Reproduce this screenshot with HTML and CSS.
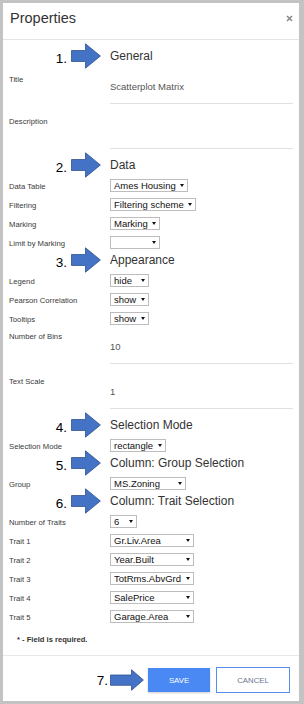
FILE: index.html
```html
<!DOCTYPE html>
<html lang="en">
<head>
    <meta charset="UTF-8">
    <meta name="viewport" content="width=device-width, initial-scale=1.0">
    <title>Properties</title>
    <link rel="stylesheet" href="styles.css">
</head>
<body>

<div class="dialog">
    <div class="dialog-header">
        <h2>Properties</h2>
        <button class="close" aria-label="Close">
            <svg width="7" height="7" viewBox="0 0 7 7"><path d="M1 1L6 6M6 1L1 6" stroke="#8a8a8a" stroke-width="1.6"/></svg>
        </button>
    </div>

    <div class="dialog-body">
        <div class="section-title">
            <div class="marker">
                <span class="step">1.</span>
                <svg class="arrow" width="30" height="26" viewBox="0 0 30 26"><path d="M0.5 7.5H14.5V0.8L29.4 13L14.5 25.2V18.5H0.5Z" fill="#4472c4" stroke="#2f528f" stroke-width="0.8"/></svg>
            </div>
            <h3>General</h3>
        </div>
        <div class="field field-first">
            <label>Title</label>
            <div class="input">Scatterplot Matrix</div>
        </div>
        <div class="field">
            <label>Description</label>
            <div class="input"></div>
        </div>

        <div class="section-title">
            <div class="marker">
                <span class="step">2.</span>
                <svg class="arrow" width="30" height="26" viewBox="0 0 30 26"><path d="M0.5 7.5H14.5V0.8L29.4 13L14.5 25.2V18.5H0.5Z" fill="#4472c4" stroke="#2f528f" stroke-width="0.8"/></svg>
            </div>
            <h3>Data</h3>
        </div>
        <div class="row">
            <label>Data Table</label>
            <div class="select"><select><option>Ames Housing</option></select></div>
        </div>
        <div class="row">
            <label>Filtering</label>
            <div class="select"><select><option>Filtering scheme</option></select></div>
        </div>
        <div class="row">
            <label>Marking</label>
            <div class="select"><select><option>Marking</option></select></div>
        </div>
        <div class="row">
            <label>Limit by Marking</label>
            <div class="select"><select><option></option><option>Marking</option></select></div>
        </div>

        <div class="section-title">
            <div class="marker">
                <span class="step">3.</span>
                <svg class="arrow" width="30" height="26" viewBox="0 0 30 26"><path d="M0.5 7.5H14.5V0.8L29.4 13L14.5 25.2V18.5H0.5Z" fill="#4472c4" stroke="#2f528f" stroke-width="0.8"/></svg>
            </div>
            <h3>Appearance</h3>
        </div>
        <div class="row">
            <label>Legend</label>
            <div class="select"><select><option>hide</option><option>show</option></select></div>
        </div>
        <div class="row">
            <label>Pearson Correlation</label>
            <div class="select"><select><option>show</option><option>hide</option></select></div>
        </div>
        <div class="row">
            <label>Tooltips</label>
            <div class="select"><select><option>show</option><option>hide</option></select></div>
        </div>
        <div class="field">
            <label>Number of Bins</label>
            <div class="input">10</div>
        </div>
        <div class="field">
            <label>Text Scale</label>
            <div class="input">1</div>
        </div>

        <div class="section-title">
            <div class="marker">
                <span class="step">4.</span>
                <svg class="arrow" width="30" height="26" viewBox="0 0 30 26"><path d="M0.5 7.5H14.5V0.8L29.4 13L14.5 25.2V18.5H0.5Z" fill="#4472c4" stroke="#2f528f" stroke-width="0.8"/></svg>
            </div>
            <h3>Selection Mode</h3>
        </div>
        <div class="row">
            <label>Selection Mode</label>
            <div class="select"><select><option>rectangle</option><option>lasso</option></select></div>
        </div>

        <div class="section-title">
            <div class="marker">
                <span class="step">5.</span>
                <svg class="arrow" width="30" height="26" viewBox="0 0 30 26"><path d="M0.5 7.5H14.5V0.8L29.4 13L14.5 25.2V18.5H0.5Z" fill="#4472c4" stroke="#2f528f" stroke-width="0.8"/></svg>
            </div>
            <h3>Column: Group Selection</h3>
        </div>
        <div class="row">
            <label>Group</label>
            <div class="select"><select><option>MS.Zoning</option><option>Neighborhood</option></select></div>
        </div>

        <div class="section-title">
            <div class="marker">
                <span class="step">6.</span>
                <svg class="arrow" width="30" height="26" viewBox="0 0 30 26"><path d="M0.5 7.5H14.5V0.8L29.4 13L14.5 25.2V18.5H0.5Z" fill="#4472c4" stroke="#2f528f" stroke-width="0.8"/></svg>
            </div>
            <h3>Column: Trait Selection</h3>
        </div>
        <div class="row">
            <label>Number of Traits</label>
            <div class="select">
                <select>
                    <option>2</option><option>3</option><option>4</option><option>5</option>
                    <option selected>6</option><option>7</option><option>8</option><option>9</option><option>10</option>
                </select>
            </div>
        </div>
        <div class="row">
            <label>Trait 1</label>
            <div class="select"><select><option>Gr.Liv.Area</option><option>TotRms.AbvGrd</option></select></div>
        </div>
        <div class="row">
            <label>Trait 2</label>
            <div class="select"><select><option>Year.Built</option><option>TotRms.AbvGrd</option></select></div>
        </div>
        <div class="row">
            <label>Trait 3</label>
            <div class="select"><select><option>TotRms.AbvGrd</option></select></div>
        </div>
        <div class="row">
            <label>Trait 4</label>
            <div class="select"><select><option>SalePrice</option><option>TotRms.AbvGrd</option></select></div>
        </div>
        <div class="row">
            <label>Trait 5</label>
            <div class="select"><select><option>Garage.Area</option><option>TotRms.AbvGrd</option></select></div>
        </div>

        <p class="required">* - Field is required.</p>
    </div>

    <div class="dialog-footer">
        <span class="step">7.</span>
        <svg class="arrow-save" width="34" height="22" viewBox="0 0 34 22"><path d="M0.5 6H21.5V0.7L33.4 11L21.5 21.3V16.3H0.5Z" fill="#4472c4" stroke="#2f528f" stroke-width="0.8"/></svg>
        <button class="btn btn-save">SAVE</button>
        <button class="btn btn-cancel">CANCEL</button>
    </div>
</div>

</body>
</html>
```

FILE: styles.css
```css
body {
    margin: 0;
    background-color: #c3c3c3;
    font-family: "Liberation Sans", Arial, sans-serif;
    color: #333;
}

.dialog {
    margin: 3px 5px 3px 3px;
    height: 698px;
    background-color: #fff;
    display: flex;
    flex-direction: column;
}

.dialog-header {
    height: 29px;
    padding: 7px 6px 0 7px;
    border-bottom: 1px solid #e5e5e5;
    display: flex;
    justify-content: space-between;
    align-items: flex-start;
}

.dialog-header h2 {
    margin: 0;
    font-size: 14.5px;
    line-height: 17px;
    font-weight: normal;
    color: #333;
}

.close {
    border: none;
    background: none;
    padding: 0;
    height: 17px;
    display: flex;
    align-items: center;
    cursor: pointer;
}

.dialog-body {
    flex: 1;
    padding: 6px 6px 0;
    border-bottom: 1px solid #e8e8e8;
}

/* section headings with the numbered arrows */
.section-title {
    display: flex;
    align-items: center;
    height: 20px;
    margin-top: 6px;
}

.section-title:first-child {
    margin-top: 0;
}

.row + .section-title {
    margin-top: 1px;
}

.section-title h3 {
    margin: 0;
    font-size: 12px;
    font-weight: normal;
    color: #333;
}

.marker {
    width: 101px;
    box-sizing: border-box;
    padding-right: 9px;
    display: flex;
    justify-content: flex-end;
    align-items: center;
    gap: 4px;
}

.step {
    font-size: 13.5px;
    color: #000;
    padding-top: 5px;
}

.arrow {
    flex-shrink: 0;
}

/* text fields */
.field {
    display: flex;
    margin-top: 12px;
}

.field-first {
    margin-top: 8px;
}

.row + .field {
    margin-top: 6px;
}

.field label,
.row label {
    width: 101px;
    flex-shrink: 0;
    font-size: 7.7px;
    line-height: 12px;
    color: #3a3a3a;
}

.field .input {
    flex: 1;
    min-height: 12px;
    padding: 10px 0;
    border-bottom: 1px solid #e0e0e0;
    font-size: 9.5px;
    line-height: 12px;
    color: #555;
}

.field-first .input {
    padding-top: 7px;
}

/* select rows */
.row {
    display: flex;
    align-items: flex-start;
    height: 13px;
    margin-top: 6px;
}

.section-title + .row {
    margin-top: 4px;
}

.row label {
    margin-top: 2px;
}

.select {
    position: relative;
    display: inline-flex;
}

.select select {
    appearance: none;
    -webkit-appearance: none;
    height: 13px;
    margin: 0;
    padding: 0 11px 0 3px;
    border: 1px solid #bdbdbd;
    border-radius: 0;
    background-color: #fff;
    font-family: "Liberation Sans", Arial, sans-serif;
    font-size: 9.5px;
    color: #111;
}

.select::after {
    content: "";
    position: absolute;
    right: 4px;
    top: 5px;
    border-left: 2px solid transparent;
    border-right: 2px solid transparent;
    border-top: 3px solid #111;
    pointer-events: none;
}

.required {
    margin: 11px 0 0;
    padding-left: 8px;
    font-size: 7.6px;
    line-height: 12px;
    font-weight: bold;
    color: #333;
}

/* footer */
.dialog-footer {
    height: 42px;
    padding: 3px 9px 0 0;
    display: flex;
    justify-content: flex-end;
    align-items: center;
}

.dialog-footer .step {
    padding-top: 0;
    margin-right: 2px;
}

.arrow-save {
    margin-right: 4px;
}

.btn {
    font-family: "Liberation Sans", Arial, sans-serif;
    font-size: 7.8px;
    cursor: pointer;
}

.btn-save {
    width: 62px;
    height: 24px;
    border: none;
    background-color: #4a89f3;
    color: #fff;
    box-shadow: 0 1px 2px rgba(0, 0, 0, 0.2);
}

.btn-cancel {
    width: 74px;
    height: 26px;
    margin-left: 6px;
    border: 1.5px solid #5a8dee;
    background-color: #fff;
    color: #6b7590;
}
```
